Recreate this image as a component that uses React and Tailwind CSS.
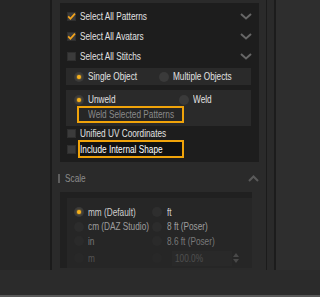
import React from 'react';

// the reference text is narrow; squeeze Liberation Sans horizontally
const T = ({ children, className = '' }) => (
    <span className={`inline-block whitespace-nowrap origin-left scale-x-[0.75] ${className}`}>{children}</span>
);

const Check = ({ checked }) => (
    <div className="w-[9px] h-[9px] bg-[#3b3b3b] border border-[#2f2f2f] flex items-center justify-center shrink-0">
        {checked && (
            <svg width="9" height="9" viewBox="0 0 9 9" className="overflow-visible">
                <polyline points="1.2,4.4 3.4,6.8 8,1.6" fill="none" stroke="#f5a41c" strokeWidth="1.7" />
            </svg>
        )}
    </div>
);

const Radio = ({ on, dim }) => (
    <div className={`w-[10px] h-[10px] rounded-full flex items-center justify-center shrink-0 ${dim ? 'bg-[#2e2e2e]' : 'bg-[#3a3a3a]'}`}>
        {on && <div className="w-[4px] h-[4px] rounded-full bg-[#f5b01c] shadow-[0_0_2px_#f5b01c]"></div>}
    </div>
);

const ChevronDown = () => (
    <svg width="12" height="7" viewBox="0 0 12 7">
        <polyline points="1,1 6,5.5 11,1" fill="none" stroke="#666" strokeWidth="2" />
    </svg>
);

const App = () => {
    const checkRows = [
        { label: 'Select All Patterns', checked: true },
        { label: 'Select All Avatars', checked: true },
        { label: 'Select All Stitchs', checked: false },
    ];

    return (
        <div className="w-[320px] h-[297px] bg-[#2b2b2b] flex flex-col overflow-hidden font-['Liberation_Sans',sans-serif] text-[11px] leading-none text-[#e2e2e2]">
            <div className="flex h-[270px]">
                <div className="w-[50px] bg-[#262626]"></div>
                <div className="w-[2px] bg-[#1b1b1b]"></div>

                {/* panel */}
                <div className="w-[214px] bg-[#2a2a2a] pl-[8px] pt-[3px] flex flex-col">
                    {/* options box */}
                    <div className="w-[199px] h-[159px] bg-[#1d1d1d] pt-[3px] pb-[4px] flex flex-col">
                        {checkRows.map((r) => (
                            <div key={r.label} className="h-[20px] pl-[7px] pr-[7px] flex items-center justify-between">
                                <div className="flex items-center gap-[4px]">
                                    <Check checked={r.checked} />
                                    <T>{r.label}</T>
                                </div>
                                <ChevronDown />
                            </div>
                        ))}

                        <div className="mt-[2px] ml-[6px] w-[185px] h-[17px] bg-[#2a2a2a] flex items-center">
                            <div className="w-[96px] pl-[8px] flex items-center gap-[4px]">
                                <Radio on />
                                <T>Single Object</T>
                            </div>
                            <div className="flex items-center gap-[4px]">
                                <Radio />
                                <T>Multiple Objects</T>
                            </div>
                        </div>

                        <div className="mt-[5px] ml-[6px] w-[185px] h-[36px] bg-[#2a2a2a] pt-[3px] flex flex-col">
                            <div className="h-[13px] flex items-center">
                                <div className="w-[113px] pl-[8px] flex items-center gap-[4px]">
                                    <Radio on />
                                    <T>Unweld</T>
                                </div>
                                <div className="flex items-center gap-[4px]">
                                    <Radio />
                                    <T>Weld</T>
                                </div>
                            </div>
                            <div className="ml-[11px] w-[107px] h-[17px] border-2 border-[#f0a30a] bg-[#262626] pl-[9px] flex items-center text-[#8a8a8a] overflow-hidden">
                                <T>Weld Selected Patterns</T>
                            </div>
                        </div>

                        <div className="h-[14px] pl-[7px] flex items-center gap-[4px]">
                            <Check />
                            <T>Unified UV Coordinates</T>
                        </div>

                        <div className="h-[18px] pl-[7px] flex items-center gap-[2px]">
                            <Check />
                            <div className="w-[106px] h-[18px] border-2 border-[#f0a30a] bg-[#111] flex items-center text-white overflow-hidden">
                                <T>Include Internal Shape</T>
                            </div>
                        </div>
                    </div>

                    {/* scale header */}
                    <div className="h-[30px] -ml-[2px] w-[201px] flex items-center justify-between pt-[2px]">
                        <div className="flex items-center gap-[5px]">
                            <div className="w-[2px] h-[9px] bg-[#5e5e5e]"></div>
                            <T className="text-[#8c8c8c]">Scale</T>
                        </div>
                        <svg width="11" height="7" viewBox="0 0 11 7">
                            <polyline points="1,6 5.5,1.5 10,6" fill="none" stroke="#5a5a5a" strokeWidth="2" />
                        </svg>
                    </div>

                    {/* scale box */}
                    <div className="w-[192px] h-[76px] bg-[#202020] pt-[6px] pl-[7px] overflow-hidden">
                        <div className="h-full bg-[#262626] pt-[7px] flex flex-col">
                            <div className="h-[15px] flex items-center">
                                <div className="w-[85px] pl-[7px] flex items-center gap-[4px]">
                                    <Radio on />
                                    <T className="text-[#cfcfcf]">mm (Default)</T>
                                </div>
                                <div className="flex items-center gap-[5px]">
                                    <Radio dim />
                                    <T className="text-[#cfcfcf]">ft</T>
                                </div>
                            </div>
                            <div className="h-[15px] flex items-center opacity-75">
                                <div className="w-[85px] pl-[7px] flex items-center gap-[4px]">
                                    <Radio dim />
                                    <T className="text-[#c4c4c4]">cm (DAZ Studio)</T>
                                </div>
                                <div className="flex items-center gap-[5px]">
                                    <Radio dim />
                                    <T className="text-[#c4c4c4]">8 ft (Poser)</T>
                                </div>
                            </div>
                            <div className="h-[15px] flex items-center opacity-55">
                                <div className="w-[85px] pl-[7px] flex items-center gap-[4px]">
                                    <Radio dim />
                                    <T className="text-[#bbb]">in</T>
                                </div>
                                <div className="flex items-center gap-[5px]">
                                    <Radio dim />
                                    <T className="text-[#bbb]">8.6 ft (Poser)</T>
                                </div>
                            </div>
                            <div className="h-[20px] flex items-center opacity-30">
                                <div className="w-[85px] pl-[7px] flex items-center gap-[4px]">
                                    <Radio dim />
                                    <T className="text-[#bbb]">m</T>
                                </div>
                                <div className="flex items-center gap-[10px]">
                                    <Radio dim />
                                    <div className="w-[60px] h-[15px] bg-[#333] pl-[3px] flex items-center text-[#aaa]">
                                        <T>100.0%</T>
                                    </div>
                                    <div className="-ml-[9px] flex flex-col gap-[2px]">
                                        <div className="w-0 h-0 border-x-[3px] border-x-transparent border-b-[4px] border-b-[#999]"></div>
                                        <div className="w-0 h-0 border-x-[3px] border-x-transparent border-t-[4px] border-t-[#999]"></div>
                                    </div>
                                </div>
                            </div>
                        </div>
                    </div>
                </div>

                <div className="w-px bg-[#1b1b1b]"></div>
                <div className="w-[7px] bg-[#2a2a2a]"></div>
                <div className="w-[2px] bg-[#1c1c1c]"></div>
                <div className="flex-1 bg-[#2e2e2e]"></div>
            </div>
            <div className="flex-1 bg-[#2b2b2b]"></div>
            <div className="h-[2px] bg-[#585858]"></div>
        </div>
    );
};

export default App;
